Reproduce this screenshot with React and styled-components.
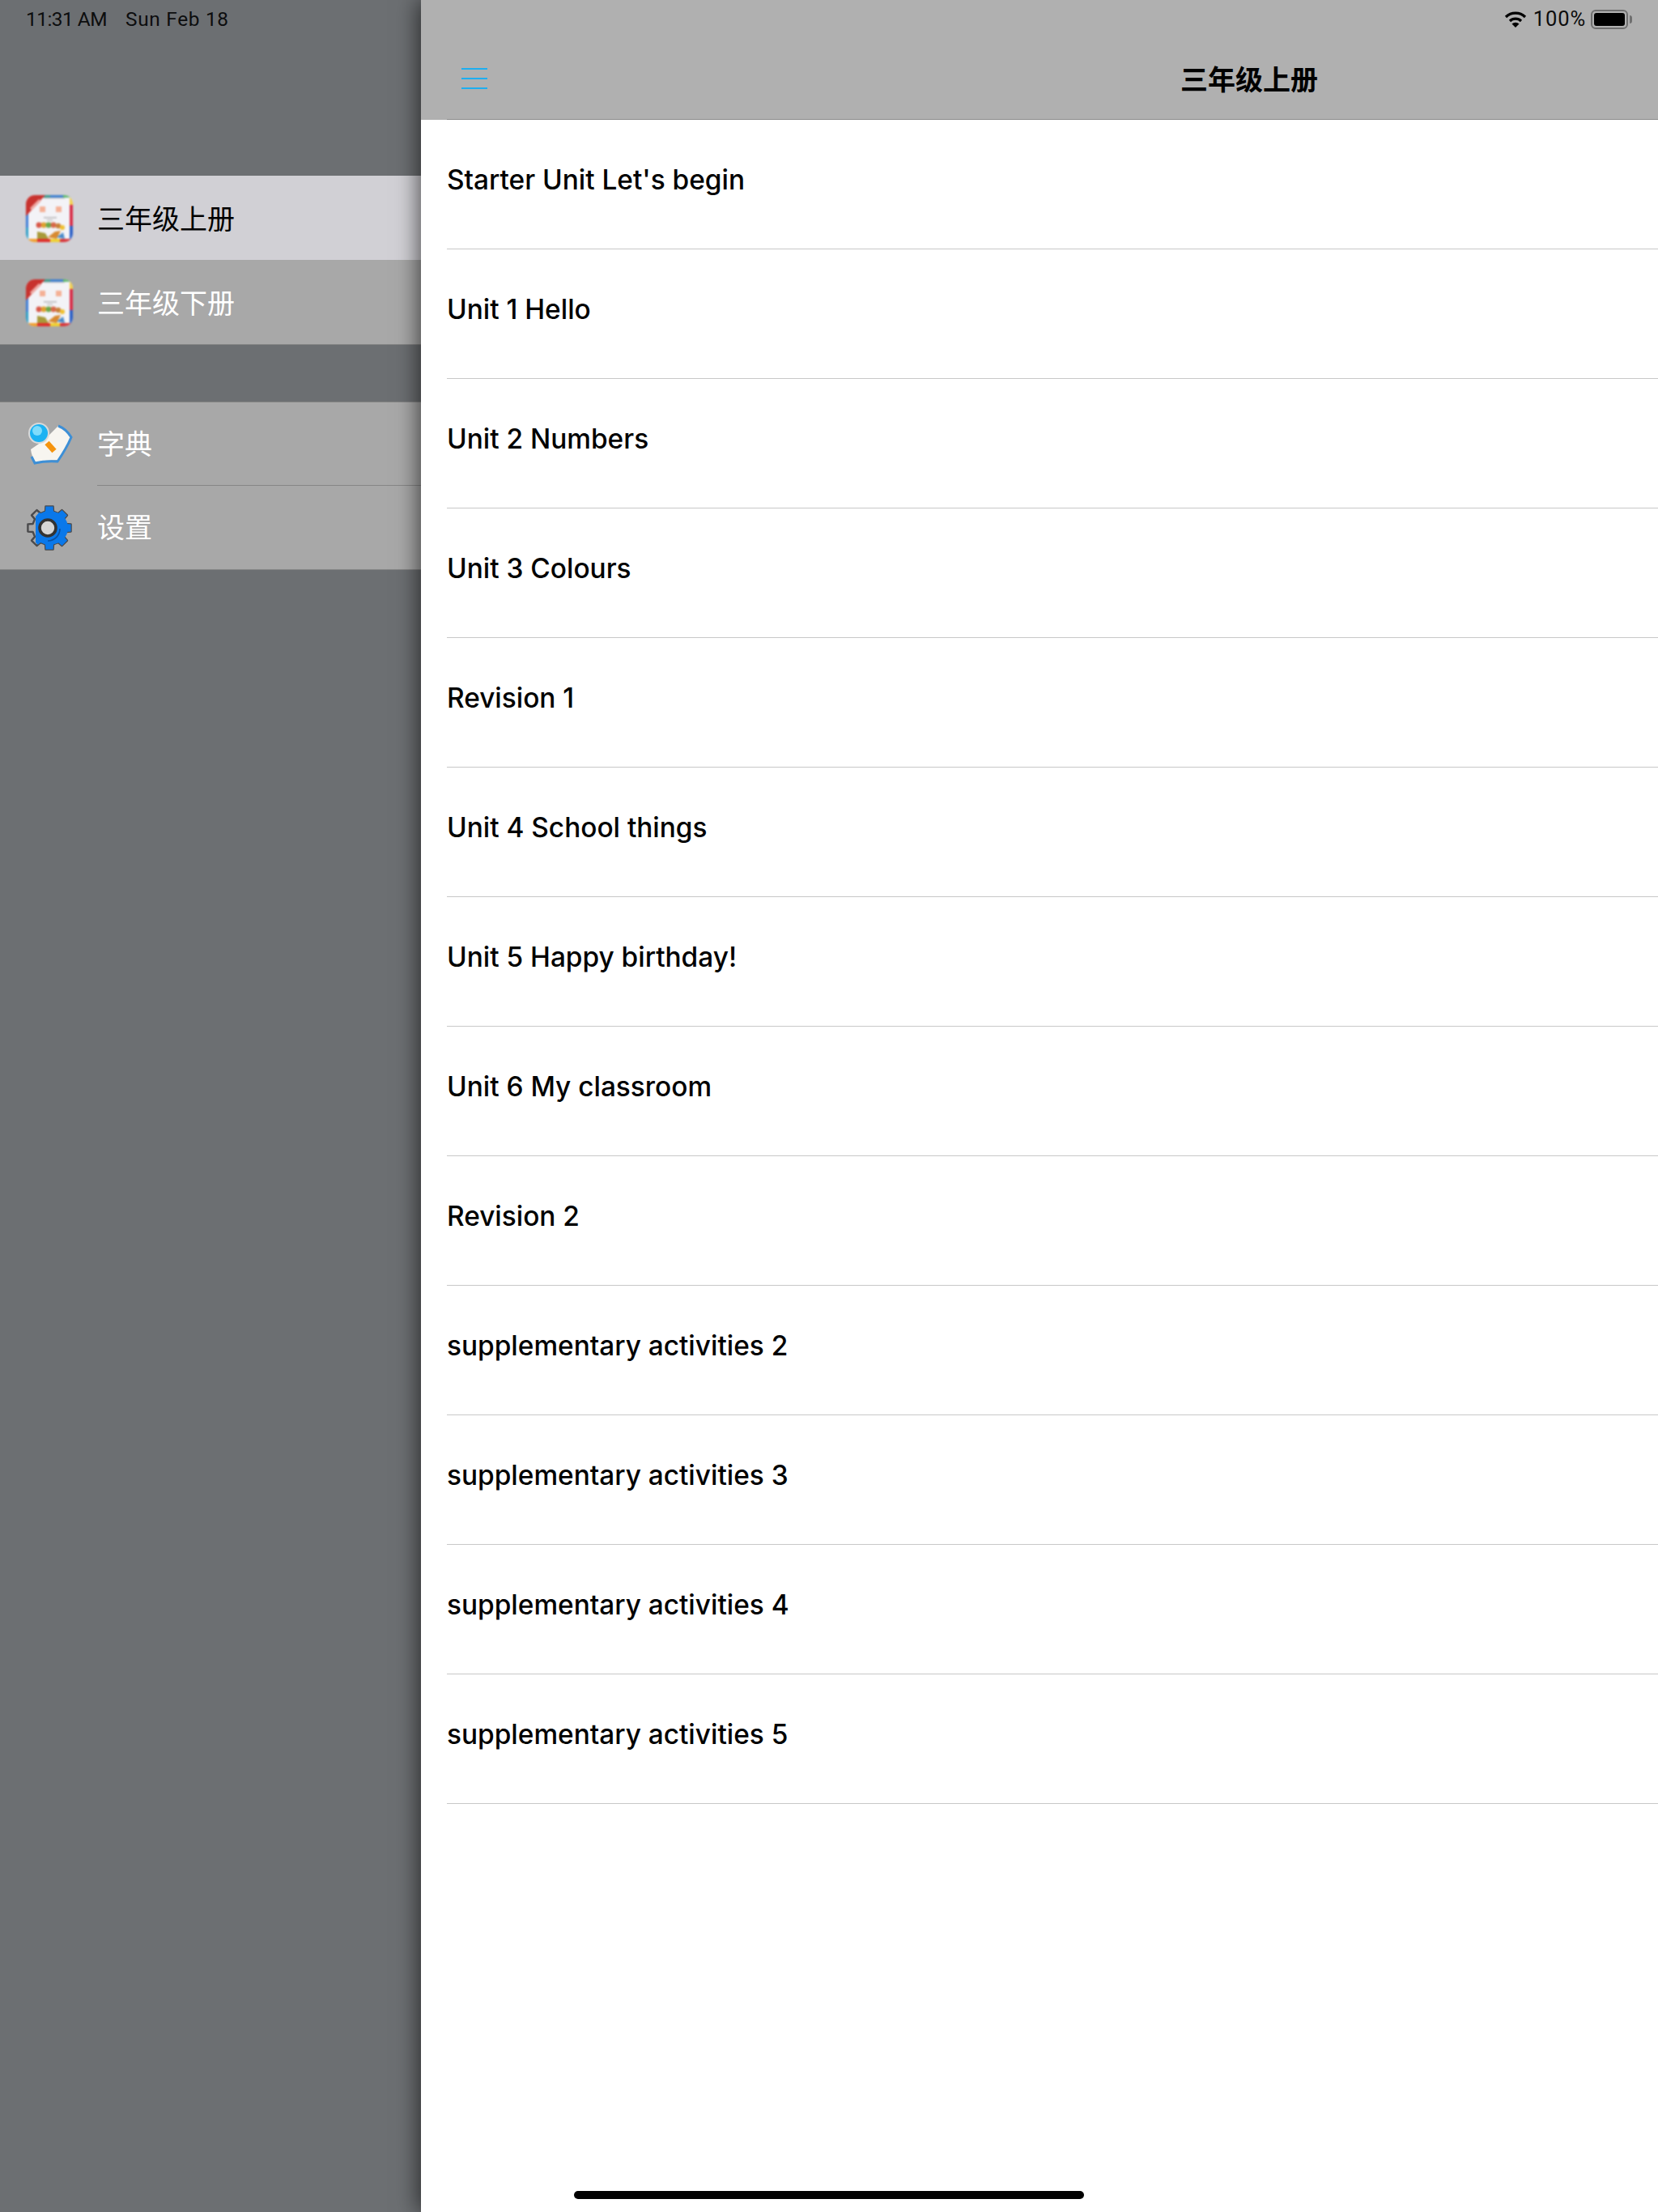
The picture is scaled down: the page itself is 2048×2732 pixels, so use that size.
import styled, { createGlobalStyle } from 'styled-components'

const GlobalStyle = createGlobalStyle`
  html, body {
    margin: 0;
    padding: 0;
    background: #fff;
  }
  * {
    box-sizing: border-box;
  }
`

const CJK = `Inter, "Noto Sans CJK SC", sans-serif`

const Screen = styled.div`
  display: flex;
  width: 2048px;
  height: 2732px;
  overflow: hidden;
  position: relative;
  font-family: ${CJK};
`
const Sidebar = styled.aside`
  width: 520px;
  flex: none;
  background: #6c6f72;
  display: flex;
  flex-direction: column;
`
const StatusLeft = styled.div`
  height: 217px;
  padding: 9px 0 0 32px;
  display: flex;
  gap: 23px;
  font-family: Roboto, sans-serif;
  font-size: 24.4px;
  line-height: 29px;
  color: #0c0d0e;
`
const StatusText = styled.span`
  letter-spacing: ${({ $spacing }) => $spacing}px;
`
const SideGroup = styled.div`
  display: flex;
  flex-direction: column;
  background: #a8a8a8;
  border-top: ${({ $top }) => ($top ? '1px solid #858585' : 'none')};
  margin-bottom: ${({ $gap }) => $gap || 0}px;
`
const SideRow = styled.div`
  height: ${({ $height }) => $height || 104}px;
  display: flex;
  align-items: center;
  padding-left: 32px;
  gap: 30px;
  background: ${({ $active }) => ($active ? '#d1d0d5' : '#a8a8a8')};
  color: ${({ $active }) => ($active ? '#000' : '#fff')};
  font-size: 34px;
  font-family: "Noto Sans CJK SC", sans-serif;
`
const SideLabel = styled.span`
  margin-top: ${({ $lift }) => -$lift}px;
`
const SideEdge = styled.div`
  height: 1px;
  background: #858585;
`
const SideRule = styled.div`
  height: 1px;
  margin-left: 120px;
  background: #868686;
`
const IconSvg = styled.svg`
  width: 58px;
  height: 58px;
  flex: none;
  margin-top: 2px;
  filter: blur(${({ $blur }) => $blur}px);
`
const Pane = styled.main`
  flex: 1;
  position: relative;
  background: #fff;
  box-shadow: -3px 0 26px rgba(0, 0, 0, 0.62);
`
const NavBar = styled.header`
  height: 148px;
  background: #b0b0b0;
  display: flex;
  flex-direction: column;
`
const StatusRight = styled.div`
  height: 48px;
  padding: 11px 37px 0 0;
  display: flex;
  justify-content: flex-end;
  align-items: flex-start;
  font-family: Roboto, sans-serif;
  font-size: 25.5px;
  line-height: 24px;
  letter-spacing: 0.9px;
  color: #0c0c0c;
`
const WifiIcon = styled.svg`
  width: 28px;
  height: 22px;
  margin: 2px 8px 0 0;
`
const Battery = styled.div`
  width: 46px;
  height: 24px;
  margin: 1px 0 0 6px;
  border: 2px solid #6f6f6f;
  border-radius: 6px;
  padding: 2px;
  position: relative;
  &::before {
    content: '';
    display: block;
    height: 100%;
    background: #000;
    border-radius: 3px;
  }
  &::after {
    content: '';
    position: absolute;
    right: -7px;
    top: 5px;
    width: 3px;
    height: 10px;
    background: #6f6f6f;
    border-radius: 0 3px 3px 0;
  }
`
const NavRow = styled.div`
  flex: 1;
  display: flex;
  align-items: center;
  padding-left: 50px;
`
const MenuIcon = styled.div`
  width: 32px;
  display: flex;
  flex-direction: column;
  gap: 10px;
  margin-top: -1px;
  span {
    height: 2px;
    background: #1eaeef;
  }
`
const NavTitle = styled.h1`
  margin: -2px 0 0 856px;
  font-size: 34px;
  font-weight: 700;
  line-height: 46px;
  color: #000;
  font-family: "Noto Sans CJK SC", sans-serif;
  white-space: nowrap;
`
const NavRule = styled.div`
  height: 1px;
  margin-left: 32px;
  background: #8c8c8c;
`
const UnitList = styled.ul`
  list-style: none;
  margin: 0;
  padding: 0 0 0 32px;
`
const UnitRow = styled.li`
  height: 160px;
  padding-top: 54px;
  border-bottom: 1px solid #c8c8c8;
  font-size: 33.4px;
  font-weight: 540;
  line-height: 40px;
  color: #000;
`
const HomeBar = styled.div`
  position: absolute;
  left: 189px;
  bottom: 16px;
  width: 630px;
  height: 10px;
  border-radius: 5px;
  background: #000;
`

const units = [
  "Starter Unit Let's begin",
  'Unit 1 Hello',
  'Unit 2 Numbers',
  'Unit 3 Colours',
  'Revision 1',
  'Unit 4 School things',
  'Unit 5 Happy birthday!',
  'Unit 6 My classroom',
  'Revision 2',
  'supplementary activities 2',
  'supplementary activities 3',
  'supplementary activities 4',
  'supplementary activities 5'
]

function BookIcon({ clipId }) {
  return (
    <IconSvg viewBox='0 0 58 58' $blur={1}>
      <defs>
        <clipPath id={clipId}>
          <rect width='58' height='58' rx='11' />
        </clipPath>
      </defs>
      <g clipPath={`url(#${clipId})`}>
        <rect width='58' height='58' fill='#f3f3f7' />
        <rect x='14' width='16' height='3' fill='#3f9a8c' />
        <rect x='30' width='16' height='3' fill='#3c7fd0' />
        <rect x='46' width='12' height='3' fill='#5cb86a' />
        <rect x='54' width='4' height='12' fill='#f2cf4a' />
        <rect x='54' y='12' width='4' height='26' fill='#d9304a' />
        <rect x='54' y='38' width='4' height='20' fill='#2f62c8' />
        <rect y='22' width='3' height='18' fill='#3f7fd8' />
        <rect y='40' width='3' height='18' fill='#2fa0c8' />
        <rect x='0' y='54' width='14' height='4' fill='#f0a030' />
        <rect x='14' y='54' width='16' height='4' fill='#e0302c' />
        <rect x='30' y='54' width='12' height='4' fill='#f0d030' />
        <rect x='42' y='54' width='16' height='4' fill='#d8383c' />
        <polygon points='0,0 24,0 0,26' fill='#c8322e' />
        <polygon points='5,16 16,5 19,7 7,19' fill='#eda9a4' />
        <rect x='17' y='14' width='7' height='7' fill='#f4b096' />
        <rect x='37' y='14' width='7' height='7' fill='#f4b096' />
        <rect x='22' y='3' width='26' height='1.5' fill='#c9c9cc' />
        <rect x='22' y='27' width='16' height='1.5' fill='#b5b5b8' />
        <rect x='26' y='30' width='7' height='1.5' fill='#c4c4c6' />
        <circle cx='16' cy='37' r='3.4' fill='#d8584a' />
        <circle cx='22' cy='37' r='3.4' fill='#e0a030' />
        <circle cx='28' cy='37' r='3.4' fill='#6aa84a' />
        <circle cx='34' cy='37' r='3.4' fill='#d8684a' />
        <circle cx='40' cy='38' r='3.2' fill='#c8803a' />
        <circle cx='45' cy='40' r='3' fill='#f0c030' />
        <polygon points='14,45 24,47 28,54 14,54' fill='#a89a3a' />
        <polygon points='27,52 36,45 43,44 38,54' fill='#d88a30' />
        <polygon points='38,52 46,46 48,54' fill='#4a8ac8' />
      </g>
    </IconSvg>
  )
}

function DictIcon() {
  return (
    <IconSvg viewBox='0 -2 58 58' $blur={0.7}>
      <path
        d='M6 33 L22 22 L40 4 Q50 8 56 18 Q50 30 40 46 Q24 46 12 49 Q7 42 6 33 Z'
        fill='#f7f5f0'
      />
      <path
        d='M40 4 Q50 8 56 18 Q50 32 39 48 Q24 47 11 50 L7 42'
        fill='none'
        stroke='#3d8fd6'
        strokeWidth='3'
      />
      <line x1='26' y1='25' x2='35' y2='35' stroke='#f5940e' strokeWidth='7' />
      <circle cx='16' cy='13' r='13' fill='#d9d9d9' />
      <circle cx='16' cy='13' r='11' fill='#1cb2f2' />
      <circle cx='14' cy='10' r='6' fill='#7fdcfb' />
    </IconSvg>
  )
}

// builds the eight toothed outline of the settings gear
function gearPath(cx, cy, outer, inner) {
  const pts = []
  for (let i = 0; i < 8; i++) {
    const a = (i * Math.PI) / 4
    const w = 0.17
    const g = 0.24
    pts.push([inner, a - g], [outer, a - w], [outer, a + w], [inner, a + g])
  }
  return (
    pts
      .map(([r, a], i) => {
        const x = (cx + r * Math.cos(a)).toFixed(1)
        const y = (cy + r * Math.sin(a)).toFixed(1)
        return `${i ? 'L' : 'M'}${x} ${y}`
      })
      .join(' ') + ' Z'
  )
}

function GearIcon() {
  const d = gearPath(29, 28, 27, 21)
  return (
    <IconSvg viewBox='0 0 58 58' $blur={0.7}>
      <defs>
        <clipPath id='gear-fill'>
          <polygon points='24,0 58,0 58,58 24,58 12,46 12,14' />
        </clipPath>
      </defs>
      <path
        d={d}
        fill='none'
        stroke='#4a4a4c'
        strokeWidth='2.4'
        strokeLinejoin='round'
      />
      <path d={d} fill='#0a78ea' clipPath='url(#gear-fill)' />
      <circle cx='32' cy='28' r='20' fill='#0a78ea' />
      <circle cx='27' cy='28' r='10' fill='#d6d6d6' stroke='#333' strokeWidth='3.6' />
      <path d='M42 29 A 15 15 0 0 1 27 44' fill='none' stroke='#0c4f9e' strokeWidth='1.6' />
    </IconSvg>
  )
}

export default function App() {
  return (
    <>
      <GlobalStyle />
      <Screen>
        <Sidebar>
          <StatusLeft>
            <StatusText $spacing={-0.5}>11:31 AM</StatusText>
            <StatusText $spacing={0.7}>Sun Feb 18</StatusText>
          </StatusLeft>
          <SideGroup $gap={70}>
            <SideRow $active>
              <BookIcon clipId='book-a' />
              <SideLabel $lift={2}>三年级上册</SideLabel>
            </SideRow>
            <SideRow>
              <BookIcon clipId='book-b' />
              <SideLabel $lift={2}>三年级下册</SideLabel>
            </SideRow>
            <SideEdge />
          </SideGroup>
          <SideGroup $top>
            <SideRow $height={102}>
              <DictIcon />
              <SideLabel $lift={4}>字典</SideLabel>
            </SideRow>
            <SideRule />
            <SideRow $height={103}>
              <GearIcon />
              <SideLabel $lift={4}>设置</SideLabel>
            </SideRow>
            <SideEdge />
          </SideGroup>
        </Sidebar>
        <Pane>
          <NavBar>
            <StatusRight>
              <WifiIcon viewBox='0 0 28 22'>
                <path d='M2 8 A 17 17 0 0 1 26 8' fill='none' stroke='#000' strokeWidth='3.2' />
                <path d='M7 13 A 10 10 0 0 1 21 13' fill='none' stroke='#000' strokeWidth='3.2' />
                <path d='M14 21 L9.5 16.5 A 6.5 6.5 0 0 1 18.5 16.5 Z' fill='#000' />
              </WifiIcon>
              <span>100%</span>
              <Battery />
            </StatusRight>
            <NavRow>
              <MenuIcon>
                <span />
                <span />
                <span />
              </MenuIcon>
              <NavTitle>三年级上册</NavTitle>
            </NavRow>
            <NavRule />
          </NavBar>
          <UnitList>
            {units.map((unit) => (
              <UnitRow key={unit}>{unit}</UnitRow>
            ))}
          </UnitList>
          <HomeBar />
        </Pane>
      </Screen>
    </>
  )
}
